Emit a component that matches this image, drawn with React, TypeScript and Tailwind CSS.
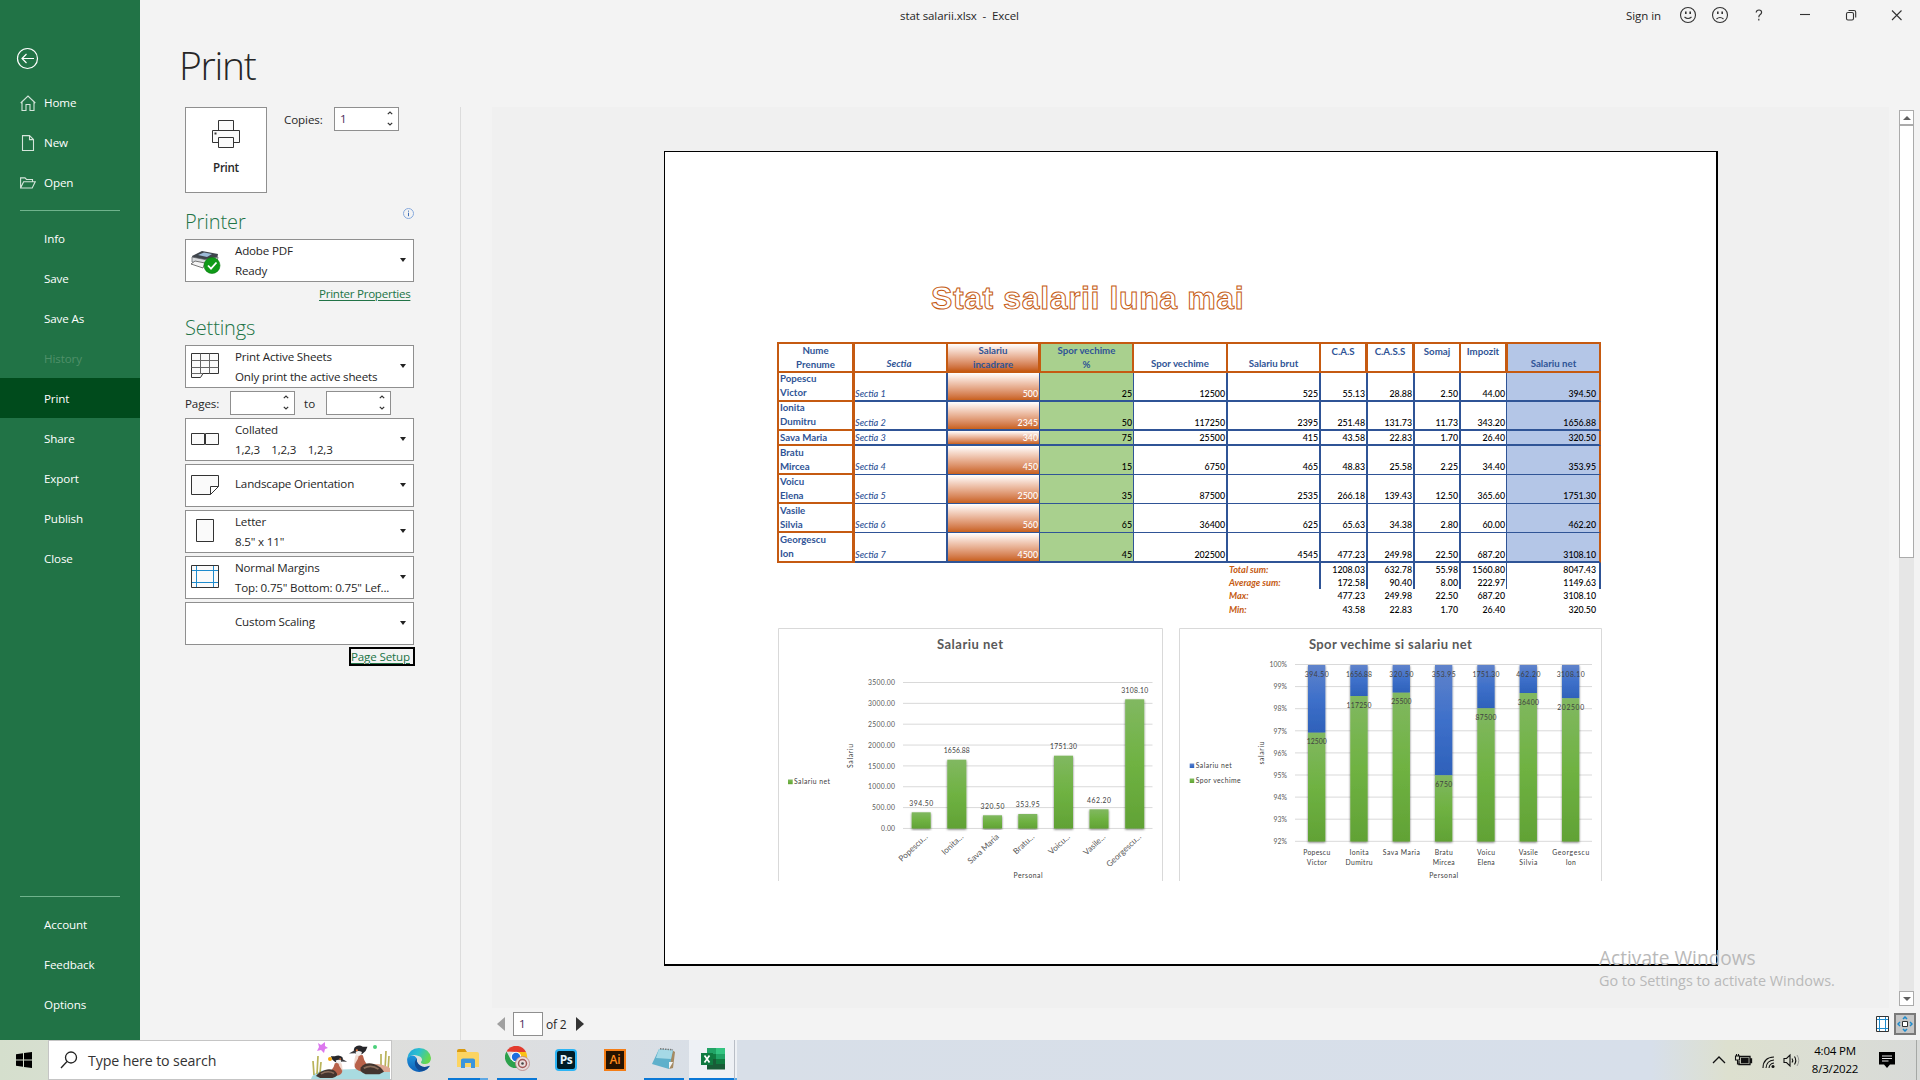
import React from "react";

const SEGOE = "font-['Open_Sans',sans-serif]";

/* ---------- Sidebar ---------- */

function NavItem({ label, icon, active, dim }: { label: string; icon?: React.ReactNode; active?: boolean; dim?: boolean }) {
  return (
    <div className={"flex h-10 shrink-0 items-center pl-5 text-[11.6px] " + (icon ? "" : "pt-px ") + (active ? "bg-[#004b1c] " : "") + (dim ? "text-[#4f9069]" : "text-white")}>
      <div className="w-6 shrink-0">{icon}</div>
      <span className="tracking-[-0.1px]">{label}</span>
    </div>
  );
}

function Sidebar() {
  return (
    <nav className="flex w-[140px] shrink-0 flex-col bg-[#217346]">
      <div className="h-[83px] shrink-0 pl-4 pt-[47px]">
        <svg width="23" height="23" viewBox="0 0 23 23" fill="none" stroke="#fff" strokeWidth="1.2">
          <circle cx="11.5" cy="11.5" r="10" />
          <path d="M18 11.5H6M10.5 7L6 11.5L10.5 16" />
        </svg>
      </div>
      <NavItem
        label="Home"
        icon={
          <svg width="16" height="17" viewBox="0 0 16 17" fill="none" stroke="#d5e5db" strokeWidth="1.1">
            <path d="M.7 8L8 1L15.3 8M2 7V15.5H6V9.5H10V15.5H14V7" />
          </svg>
        }
      />
      <NavItem
        label="New"
        icon={
          <svg width="16" height="17" viewBox="0 0 16 17" fill="none" stroke="#d5e5db" strokeWidth="1.1">
            <path d="M2.5 .6H9.5L13.5 4.6V15.5H2.5ZM9.5 .6V4.6H13.5" />
          </svg>
        }
      />
      <NavItem
        label="Open"
        icon={
          <svg width="16" height="13" viewBox="0 0 16 13" fill="none" stroke="#d5e5db" strokeWidth="1.1">
            <path d="M.6 11V.9H5L6.5 2.5H12.5V4.8M.6 11L3.6 4.8H15.2L12.2 11Z" />
          </svg>
        }
      />
      <div className="ml-5 mt-[7px] h-px w-[100px] shrink-0 bg-[#6fb38c]" />
      <div className="h-[7px] shrink-0" />
      <NavItem label="Info" />
      <NavItem label="Save" />
      <NavItem label="Save As" />
      <NavItem label="History" dim />
      <NavItem label="Print" active />
      <NavItem label="Share" />
      <NavItem label="Export" />
      <NavItem label="Publish" />
      <NavItem label="Close" />
      <div className="grow" />
      <div className="mb-[7px] ml-5 h-px w-[100px] shrink-0 bg-[#6fb38c]" />
      <NavItem label="Account" />
      <NavItem label="Feedback" />
      <NavItem label="Options" />
      <div className="h-4 shrink-0" />
    </nav>
  );
}

/* ---------- Title bar ---------- */

function TitleBar() {
  return (
    <div className="flex h-8 shrink-0 items-center text-[11.5px] text-[#262626]">
      <div className="w-[760px] shrink-0" />
      <div className="w-[726px] whitespace-pre tracking-[-0.08px]">stat salarii.xlsx  -  Excel</div>
      <div className="w-[53px] tracking-[-0.05px]">Sign in</div>
      <svg className="-mt-0.5" width="228" height="18" viewBox="0 0 228 18" fill="none" stroke="#333" strokeWidth="1.1">
        <circle cx="9" cy="9" r="7.5" />
        <path d="M5.5 11Q9 14 12.5 11" />
        <path d="M6.8 5.5v2.4M11.2 5.5v2.4" strokeWidth="1.6" />
        <circle cx="41" cy="9" r="7.5" />
        <path d="M37.5 13Q41 10 44.5 13" />
        <path d="M38.8 5.5v2.4M43.2 5.5v2.4" strokeWidth="1.6" />
        <path d="M77.2 6.5Q77.4 4 80 4Q82.600 4 82.600 6.3Q82.600 7.800 81 8.800Q79.800 9.600 79.800 11.200M79.800 12.800v1.6" strokeWidth="1.2" />
        <path d="M121 8.5h10" />
        <rect x="167.500" y="6.500" width="7" height="7.500" rx="1.500" />
        <path d="M169.500 4.500H175Q176.700 4.500 176.700 6.200V11.500" />
        <path d="M213 4.500L222.500 14M222.500 4.500L213 14" />
      </svg>
    </div>
  );
}

/* ---------- Print settings ---------- */

function Spinner({ value }: { value?: string }) {
  return (
    <div className="flex h-6 w-[65px] shrink-0 items-center justify-between border border-[#8f8f8f] bg-white px-[5px]">
      <span className="text-[11.6px] text-[#4a2a5a]">{value}</span>
      <svg className="mb-px" width="6" height="15" viewBox="0 0 6 15" fill="none" stroke="#333" strokeWidth="1.2">
        <path d="M.8 3.200L3 1L5.200 3.200M.8 11.800L3 14L5.200 11.800" />
      </svg>
    </div>
  );
}

function Combo({ icon, first, second, className }: { icon?: React.ReactNode; first: string; second?: string; className?: string }) {
  return (
    <div className={"flex h-[43px] w-[229px] shrink-0 items-center border border-[#8f8f8f] bg-white text-[11.6px] text-[#262626] " + (className ?? "")}>
      <div className="flex w-[49px] shrink-0 items-center pb-px pl-1">{icon}</div>
      <div className={"flex grow flex-col whitespace-pre leading-5 tracking-[-0.18px] " + (second ? "pt-px" : "pb-[3px]")}>
        <span>{first}</span>
        {second && <span>{second}</span>}
      </div>
      <div className="mb-px mr-[7px] h-0 w-0 border-x-[3.5px] border-t-4 border-x-transparent border-t-[#222]" />
    </div>
  );
}

const inkIcon = { fill: "#fafafa", stroke: "#333", strokeWidth: 1 };

function SettingsPanel() {
  return (
    <section className="flex w-[321px] shrink-0 flex-col border-r border-[#dcdcdc] pl-[45px]">
      <div className="flex">
        <div className="flex h-[86px] w-[82px] flex-col items-center border border-[#8f8f8f] bg-white pt-3">
          <svg width="28" height="28" viewBox="0 0 28 28" {...inkIcon}>
            <path d="M6.500 10.500V.5H21.500V10.500M.5 10.500H27.500V22.500H.5Z" />
            <path d="M6.500 17.500H21.500V27.500H6.500Z" />
            <path d="M2.500 12.500h2v2h-2z" fill="#333" stroke="none" />
          </svg>
          <span className="mt-[11px] text-[11.6px] font-semibold leading-[18px] tracking-[-0.3px] text-[#262626]">Print</span>
        </div>
        <span className="ml-[17px] mt-[4px] w-[50px] text-[11.6px] leading-[18px] tracking-[-0.1px] text-[#262626]">Copies:</span>
        <Spinner value="1" />
      </div>
      <div className="mt-3 flex h-[34px] w-[229px] items-start justify-between">
        <h2 className="mt-0.5 text-[20px] font-[350] leading-[30px] tracking-[-0.1px] text-[#217346]">Printer</h2>
        <svg className="mt-[3px]" width="11" height="11" viewBox="0 0 11 11" fill="none">
          <circle cx="5.500" cy="5.500" r="5" stroke="#86a9dc" />
          <path d="M5.500 4.700V8.200M5.500 2.600V3.700" stroke="#3f6fb5" />
        </svg>
      </div>
      <Combo
        first="Adobe PDF"
        second="Ready"
        icon={
          <svg className="mt-1" width="31" height="24" viewBox="0 0 31 24">
            <path d="M2 6L12 1L28 4L27 9L14 11L3 9Z" fill="#3f454c" />
            <path d="M8 5L14 2.500L22 4L17 7Z" fill="#9dbbd8" />
            <path d="M2 7L15 9.500L28 7L27 12L15 15L2 12Z" fill="#d9dcdf" stroke="#5a5d62" strokeWidth=".7" />
            <path d="M1 14L5 11L15 13L13 18Z" fill="#f4f4f4" stroke="#555" strokeWidth=".8" />
            <circle cx="22" cy="15.500" r="8" fill="#0f9a17" stroke="#0a7a10" strokeWidth=".6" />
            <path d="M18 15.500L21 18.700L26.500 12.500" fill="none" stroke="#fff" strokeWidth="1.800" />
          </svg>
        }
      />
      <a className="ml-[134px] mt-[3px] w-[95px] whitespace-nowrap text-[11.6px] leading-[18px] tracking-[-0.27px] text-[#217346] underline underline-offset-2">Printer Properties</a>
      <h2 className="mt-[10px] h-[32px] text-[20px] font-[350] leading-[30px] tracking-[-0.15px] text-[#217346]">Settings</h2>
      <Combo
        first="Print Active Sheets"
        second="Only print the active sheets"
        icon={
          <svg width="30" height="26" viewBox="0 0 30 26" {...inkIcon}>
            <path d="M1.500 .5H28.500V20.500H13L10.500 24.500H1.500Z" />
            <path d="M1.500 7.500H28.500M1.500 14.500H28.500M10.500 .5V20.500M19.500 .5V20.500M1.500 20.500H13" stroke="#666" />
          </svg>
        }
      />
      <div className="my-[3px] flex h-6 items-center text-[11.6px] text-[#262626]">
        <span className="w-[45px] pt-px tracking-[-0.1px]">Pages:</span>
        <Spinner />
        <span className="w-[31px] pl-[9px] pt-px">to</span>
        <Spinner />
      </div>
      <Combo
        className="mb-[3px]"
        first="Collated"
        second="1,2,3    1,2,3    1,2,3"
        icon={
          <svg width="30" height="12" viewBox="0 0 30 12" {...inkIcon}>
            <path d="M1.500 .5H14.500V11.500H1.500ZM15.500 .5H28.500V11.500H15.500Z" />
          </svg>
        }
      />
      <Combo
        className="mb-[3px]"
        first="Landscape Orientation"
        icon={
          <svg width="30" height="20" viewBox="0 0 30 20" {...inkIcon}>
            <path d="M1.500 .5H28.500V11.500L20.500 19.500H1.500ZM28.500 11.500H20.500V19.500" />
          </svg>
        }
      />
      <Combo
        className="mb-[3px]"
        first="Letter"
        second={'8.5" x 11"'}
        icon={
          <svg width="30" height="24" viewBox="0 0 30 24" {...inkIcon}>
            <path d="M6.500 .5H23.500V22.500H6.500Z" />
          </svg>
        }
      />
      <Combo
        className="mb-[3px]"
        first="Normal Margins"
        second={'Top: 0.75" Bottom: 0.75" Lef...'}
        icon={
          <svg width="30" height="24" viewBox="0 0 30 24" {...inkIcon}>
            <path d="M1.500 .5H28.500V22.500H1.500Z" />
            <path d="M2 5.500H28M2 17.500H28M6.500 1V22M23.500 1V22" stroke="#1e8bcd" />
          </svg>
        }
      />
      <Combo first="Custom Scaling" />
      <div className="ml-[164px] mt-0.5 flex h-[19px] w-[66px] items-center border-2 border-black">
        <a className="whitespace-nowrap text-[11.6px] leading-[15px] tracking-[-0.15px] text-[#217346] underline underline-offset-2">Page Setup</a>
      </div>
    </section>
  );
}

/* ---------- Worksheet preview ---------- */

const people = [
  ["Popescu", "Victor", "500", "25", "12500", "525", "55.13", "28.88", "2.50", "44.00", "394.50"],
  ["Ionita", "Dumitru", "2345", "50", "117250", "2395", "251.48", "131.73", "11.73", "343.20", "1656.88"],
  ["Sava Maria", "", "340", "75", "25500", "415", "43.58", "22.83", "1.70", "26.40", "320.50"],
  ["Bratu", "Mircea", "450", "15", "6750", "465", "48.83", "25.58", "2.25", "34.40", "353.95"],
  ["Voicu", "Elena", "2500", "35", "87500", "2535", "266.18", "139.43", "12.50", "365.60", "1751.30"],
  ["Vasile", "Silvia", "560", "65", "36400", "625", "65.63", "34.38", "2.80", "60.00", "462.20"],
  ["Georgescu", "Ion", "4500", "45", "202500", "4545", "477.23", "249.98", "22.50", "687.20", "3108.10"],
];

const totals = [
  ["Total sum:", "1208.03", "632.78", "55.98", "1560.80", "8047.43"],
  ["Average sum:", "172.58", "90.40", "8.00", "222.97", "1149.63"],
  ["Max:", "477.23", "249.98", "22.50", "687.20", "3108.10"],
  ["Min:", "43.58", "22.83", "1.70", "26.40", "320.50"],
];

const COLS = "grid grid-rows-[100%] grid-cols-[78px_93px_92px_94px_94px_93px_47px_47px_46px_46px_94px]";

const headers = [
  { t: "Nume\nPrenume", c: "border-l-2 border-r-[3px] items-end" },
  { t: "Sectia", c: "border-r-2 items-end pb-px pr-[3px] italic" },
  { t: "Salariu\nincadrare", c: "border-r-2 items-end bg-linear-to-b from-white to-[#c55a11]" },
  { t: "Spor vechime\n%", c: "border-r-2 border-l items-end bg-[#a9d08e]" },
  { t: "Spor vechime", c: "border-r-2 items-end pb-px" },
  { t: "Salariu brut", c: "border-r-2 items-end pb-px" },
  { t: "C.A.S", c: "border-r-[3px] items-start" },
  { t: "C.A.S.S", c: "border-r-[3px] items-start" },
  { t: "Somaj", c: "border-r-2 items-start" },
  { t: "Impozit", c: "border-r-2 items-start" },
  { t: "Salariu net", c: "border-l border-r-2 items-end pb-px bg-[#b4c6e7]" },
];

const numberCols = [
  "border-r text-white bg-linear-to-b from-white to-[#c8601a]",
  "border-r bg-[#a9d08e]",
  "border-r-2",
  "border-r-2",
  "border-r-2",
  "border-r-2",
  "border-r-2",
  "border-r",
  "border-r-2 border-r-[#c55a11] bg-[#b4c6e7]",
];

const rowHeights = ["h-[29px]", "h-[29px]", "h-[15px]", "h-[29px]", "h-[29px]", "h-[29px]", "h-[30px]"];

function SalaryTable() {
  return (
    <div className="w-[824px] font-[Lato,sans-serif] text-[8.800px] font-medium leading-[13px] text-black">
      <div className={COLS + " h-[31px]"}>
        {headers.map((h, i) => (
          <div key={i} className={"flex justify-center whitespace-pre border-y-2 border-[#c55a11] text-center text-[9.700px] font-bold leading-[14px] text-[#2f5496] " + h.c}>
            {h.t}
          </div>
        ))}
      </div>
      {people.map((p, r) => {
        const thick = r < 3 || r === 6;
        return (
          <div key={r} className={COLS + " " + rowHeights[r]}>
            <div className={"flex flex-col justify-end border-b-2 border-l-2 border-r-[3px] border-[#c55a11] pl-px text-[9.700px] font-bold text-[#2f5496] " + (p[1] ? "leading-[14px] " : "leading-[13px] ") + (thick && p[1] ? "pb-px" : "")}>
              <span>{p[0]}</span>
              {p[1] && <span>{p[1]}</span>}
            </div>
            <div className={"flex items-end border-r-2 border-[#2f5496] text-[9.200px] italic leading-[12px] text-[#2f5496] " + (thick ? "border-b-2" : "border-b pb-px")}>Sectia {r + 1}</div>
            {p.slice(2).map((v, c) => (
              <div key={c} className={"flex items-end justify-end border-b-[#2f5496] leading-[13px] " + (c < 8 ? "border-r-[#2f5496] pr-px " : "pr-[3px] ") + (thick ? "border-b-2 " : "border-b pb-px ") + numberCols[c]}>
                {v}
              </div>
            ))}
          </div>
        );
      })}
      {totals.map((t, r) => (
        <div key={r} className={COLS + " h-[13.200px]"}>
          <div className="col-span-5" />
          <div className={"pl-px text-[9.200px] font-bold italic leading-[14px] text-[#c55a11] " + (r < 2 ? "border-r-2 border-[#2f5496]" : "")}>{t[0]}</div>
          {t.slice(1).map((v, c) => (
            <div key={c} className={"text-right leading-[13px] " + (r < 2 ? "border-[#2f5496] " + (c === 3 ? "border-r pr-px" : c === 4 ? "border-r-2 pr-[3px]" : "border-r-2 pr-px") : c === 3 ? "pr-0.5" : c === 4 ? "pr-[5px]" : "pr-[3px]")}>
              {v}
            </div>
          ))}
        </div>
      ))}
    </div>
  );
}

/* ---------- Charts ---------- */

function Gradients() {
  return (
    <defs>
      <linearGradient id="greenBar" x1="0" y1="0" x2="0" y2="1">
        <stop offset="0" stopColor="#81b861" />
        <stop offset=".5" stopColor="#6fb242" />
        <stop offset="1" stopColor="#61a235" />
      </linearGradient>
      <linearGradient id="blueBar" x1="0" y1="0" x2="0" y2="1">
        <stop offset="0" stopColor="#6083cb" />
        <stop offset=".5" stopColor="#3e70ca" />
        <stop offset="1" stopColor="#2e61ba" />
      </linearGradient>
      <filter id="barShadow" x="-30%" y="-5%" width="160%" height="115%">
        <feDropShadow dx="0" dy="1" stdDeviation="1" floodOpacity=".55" />
      </filter>
    </defs>
  );
}

const netBars = [
  { n: "Popescu...", v: "394.50", x: 911.7, y: 812.3, ly: 803.7, w: 24 },
  { n: "Ionita...", v: "1656.88", x: 947.3, y: 759.7, ly: 750.7, w: 26 },
  { n: "Sava Maria", v: "320.50", x: 983, y: 815.3, ly: 806.3, w: 24 },
  { n: "Bratu...", v: "353.95", x: 1018.3, y: 814, ly: 804.700, w: 24 },
  { n: "Voicu...", v: "1751.30", x: 1054, y: 755.7, ly: 746.3, w: 27 },
  { n: "Vasile...", v: "462.20", x: 1089.5, y: 809.3, ly: 800.3, w: 24 },
  { n: "Georgescu...", v: "3108.10", x: 1125.2, y: 699.3, ly: 690.7, w: 27 },
];

function NetChart() {
  const ticks = ["3500.00", "3000.00", "2500.00", "2000.00", "1500.00", "1000.00", "500.00", "0.00"];
  return (
    <svg width="386" height="254" viewBox="778 628 386 254" className="font-[Lato,sans-serif] text-[6.800px]" fill="#404040">
      <Gradients />
      <path d="M778.500 882V628.500H1162.500V882" fill="#fff" stroke="#d9d9d9" />
      <text x="970" y="649" textAnchor="middle" textLength="66" className="text-[13px] font-bold" fill="#595959">Salariu net</text>
      {ticks.map((t, i) => (
        <g key={t}>
          <path d={`M903 ${682.5 + i * 20.85}H1152.500`} stroke="#d9d9d9" />
          <text x="895" y={685.2 + i * 20.85} textAnchor="end" textLength={i < 6 ? 27 : i === 6 ? 23 : 14} fill="#595959">{t}</text>
        </g>
      ))}
      {netBars.map((b) => (
        <g key={b.n}>
          <rect x={b.x} y={b.y} width="19" height={828.5 - b.y} fill="url(#greenBar)" filter="url(#barShadow)" />
          <text x={b.x + 9.5} y={b.ly + 2.500} textAnchor="middle" textLength={b.w}>{b.v}</text>
          <text transform={`translate(${b.x + 16.500} 837.500) rotate(-43)`} textAnchor="end" fill="#595959" className="text-[8.200px]">{b.n}</text>
        </g>
      ))}
      <text transform="translate(853 756) rotate(-90)" textAnchor="middle" textLength="24">Salariu</text>
      <rect x="788" y="779.500" width="4.700" height="4.700" fill="url(#greenBar)" />
      <text x="794" y="784.300" textLength="36">Salariu net</text>
      <text x="1028" y="877.500" textAnchor="middle" textLength="29">Personal</text>
    </svg>
  );
}

const stackBars = [
  { n: ["Popescu", "Victor"], w: [27, 20], net: "394.50", nw: 24, sp: "12500", sw: 20, y: 732.7 },
  { n: ["Ionita", "Dumitru"], w: [19, 27], net: "1656.88", nw: 26, sp: "117250", sw: 25, y: 696 },
  { n: ["Sava Maria"], w: [37], net: "320.50", nw: 24, sp: "25500", sw: 20, y: 692.7 },
  { n: ["Bratu", "Mircea"], w: [18, 22], net: "353.95", nw: 24, sp: "6750", sw: 17, y: 775.3 },
  { n: ["Voicu", "Elena"], w: [18, 17], net: "1751.30", nw: 27, sp: "87500", sw: 21, y: 708.3 },
  { n: ["Vasile", "Silvia"], w: [19, 18], net: "462.20", nw: 24, sp: "36400", sw: 21, y: 693 },
  { n: ["Georgescu", "Ion"], w: [37, 10], net: "3108.10", nw: 28, sp: "202500", sw: 27, y: 698.3 },
];

function StackedChart() {
  return (
    <svg width="424" height="254" viewBox="1179 628 424 254" className="font-[Lato,sans-serif] text-[6.800px]" fill="#404040">
      <path d="M1179.500 882V628.500H1601.500V882" fill="#fff" stroke="#d9d9d9" />
      <text x="1390.400" y="649" textAnchor="middle" textLength="163" className="text-[13px] font-bold" fill="#595959">Spor vechime si salariu net</text>
      {[100, 99, 98, 97, 96, 95, 94, 93, 92].map((t, i) => (
        <g key={t}>
          <path d={`M1295 ${664.5 + i * 22.1}H1592`} stroke="#d9d9d9" />
          <text x="1287" y={667.2 + i * 22.1} textAnchor="end" textLength={i ? 13.5 : 17.5} fill="#595959">{t}%</text>
        </g>
      ))}
      {stackBars.map((b, i) => {
        const x = 1308 + i * 42.33;
        return (
          <g key={b.sp}>
            <g filter="url(#barShadow)">
              <rect x={x} y="665" width="17.300" height={b.y - 665} fill="url(#blueBar)" />
              <rect x={x} y={b.y} width="17.300" height={841.5 - b.y} fill="url(#greenBar)" />
            </g>
            <text x={x + 8.7} y="676.800" textAnchor="middle" textLength={b.nw}>{b.net}</text>
            <text x={x + 8.7} y={b.y + 11.5} textAnchor="middle" textLength={b.sw}>{b.sp}</text>
            {b.n.map((n, k) => (
              <text key={n} x={x + 8.7} y={854.8 + k * 10} textAnchor="middle" textLength={b.w[k]}>{n}</text>
            ))}
          </g>
        );
      })}
      <text transform="translate(1264 753) rotate(-90)" textAnchor="middle" textLength="23">salariu</text>
      <rect x="1189.700" y="763.500" width="4.500" height="4.500" fill="url(#blueBar)" />
      <text x="1195.700" y="768.300" textLength="36">Salariu net</text>
      <rect x="1189.700" y="778.500" width="4.500" height="4.500" fill="url(#greenBar)" />
      <text x="1195.700" y="783.300" textLength="45">Spor vechime</text>
      <text x="1443.700" y="877.500" textAnchor="middle" textLength="29">Personal</text>
    </svg>
  );
}

function PreviewPage() {
  return (
    <div className="flex h-[815px] w-[1054px] flex-col border-b-2 border-l border-r-2 border-t border-black bg-white pl-[112px]">
      <h3 className="ml-[154px] mt-[123px] h-[41px] whitespace-nowrap pt-px font-['Liberation_Sans',sans-serif] text-[32px] font-bold leading-[44px] tracking-[0.6px] text-white [-webkit-text-stroke:1px_#c55a11]">
        Stat salarii luna mai
      </h3>
      <div className="mt-[26px]">
        <SalaryTable />
      </div>
      <div className="ml-px mt-[12px] flex h-[253px] gap-[15px] overflow-hidden">
        <NetChart />
        <StackedChart />
      </div>
    </div>
  );
}

function VScroll() {
  return (
    <div className="mt-[3px] flex h-[896px] w-[15px] flex-col bg-[#e6e6e6]">
      <div className="flex h-[15px] items-center justify-center border border-[#ababab] bg-white">
        <div className="border-x-4 border-b-4 border-x-transparent border-b-[#606060]" />
      </div>
      <div className="h-[433px] border border-[#ababab] bg-white" />
      <div className="grow" />
      <div className="flex h-[15px] items-center justify-center border border-[#ababab] bg-white">
        <div className="border-x-4 border-t-4 border-x-transparent border-t-[#606060]" />
      </div>
    </div>
  );
}

function PreviewArea() {
  return (
    <section className="flex grow flex-col pl-[31px]">
      <div className="flex h-[901px]">
        <div className="w-[1397px] shrink-0 bg-[#f0f0f0] pl-[172px] pt-[44px]">
          <PreviewPage />
        </div>
        <div className="w-[10px] shrink-0" />
        <VScroll />
      </div>
      <div className="flex h-8 items-center pl-[5px]">
        <div className="border-y-[7.5px] border-r-8 border-y-transparent border-r-[#a0a0a0]" />
        <div className="ml-2 flex h-6 w-[30px] items-center border border-[#8f8f8f] bg-white pl-[5px] text-[11.600px] text-[#4a2a5a]">1</div>
        <span className="w-[33px] pl-[3px] pt-px text-[12px] tracking-[-0.2px] text-[#262626]">of 2</span>
        <div className="border-y-[7.5px] border-l-8 border-y-transparent border-l-[#333]" />
        <div className="grow" />
        <svg className="mr-[5px]" width="13" height="16" viewBox="0 0 13 16" fill="#fff" stroke="#333">
          <path d="M.5 .5H12.500V15.500H.5Z" />
          <path d="M1 3.500H12M1 12.500H12M3.500 1V15M9.500 1V15" stroke="#1e8bcd" />
        </svg>
        <div className="mr-1 flex h-[22px] w-[22px] items-center justify-center border-2 border-[#7a7a7a] bg-[#c6c6c6]">
          <svg width="16" height="16" viewBox="0 0 16 16" fill="none">
            <path d="M5.500 5.500H10.500V10.500H5.500Z" fill="#fff" stroke="#333" />
            <path d="M6 3L8 1L10 3M6 13L8 15L10 13M3 6L1 8L3 10M13 6L15 8L13 10" stroke="#1e8bcd" strokeWidth="1.500" />
          </svg>
        </div>
      </div>
    </section>
  );
}

/* ---------- Taskbar ---------- */

/* A grebe facing right; the body trails to the left of the neck. */
function Duck() {
  return (
    <g>
      <path d="M23 12Q22 18 19 22L24 31Q33 29 32 22Q31 16 30 11Z" fill="#b8624a" />
      <path d="M27 11Q28 17 31 21L32 24Q33 16 30 10Z" fill="#efd9cf" />
      <path d="M0 31Q3 25 11 22Q20 19 25 26Q28 31 20 34H5Z" fill="#43352f" />
      <path d="M6 28Q14 22 22 27" fill="none" stroke="#8b6e5c" strokeWidth="2" />
      <path d="M20 7L18 2L23 2Q28 -1 32 3Q34 7 31 10Q25 12 23 10Z" fill="#26262a" />
      <path d="M24 8Q28 6 31 8L30 12Q25 14 24 8Z" fill="#f2f0ee" />
      <path d="M32 6L38 10L31 9.500Z" fill="#3a3a3e" />
      <circle cx="29.500" cy="6" r="1.200" fill="#e8763a" />
    </g>
  );
}

function TaskSlot({ className, children }: { className: string; children: React.ReactNode }) {
  return <div className={"flex h-10 shrink-0 items-center justify-center " + className}>{children}</div>;
}

function Taskbar() {
  return (
    <footer className="flex h-10 shrink-0 bg-[linear-gradient(90deg,#d5dfcd_0%,#dbdfd6_8%,#dedede_24%,#d8dfe8_38%,#d7dfea_86%,#dde0cf_90%,#dbded4_95%,#d8dad8_100%)] text-black">
      <div className="flex w-12 items-center pl-4">
        <svg width="16" height="16" viewBox="0 0 16 16" fill="#000">
          <path d="M0 2.300L7 1.300V7.500H0ZM8 1.100L16 0V7.500H8ZM0 8.500H7V14.700L0 13.700ZM8 8.500H16V16L8 14.900Z" />
        </svg>
      </div>
      <div className="flex w-[344px] shrink-0 items-center border border-[#c5c5c5] bg-white pl-[11px]">
        <svg width="18" height="18" viewBox="0 0 18 18" fill="none" stroke="#222" strokeWidth="1.300">
          <circle cx="11" cy="6.500" r="5.500" />
          <path d="M7 10.500L1 17" />
        </svg>
        <span className="ml-[10px] w-[223px] shrink-0 pt-px text-[14.200px] tracking-[-0.12px] text-[#333]">Type here to search</span>
        <svg className="shrink-0 self-end" width="79" height="37" viewBox="0 0 79 37">
          <path d="M0 37Q2 30 14 28L79 26V37Z" fill="#a9dbe0" />
          <path d="M3 33L2 19M6 32L7 14M9 31L10 20M70 29L70 12M74 28L75 9M77 29L78 14" stroke="#b9b35a" strokeWidth="1.700" />
          <path d="M54 26Q64 18 79 26V30H56Z" fill="#dda892" />
          <g transform="translate(5 13) scale(.82 .68)"><Duck /></g>
          <g transform="translate(73 3) scale(-.92 .86)"><Duck /></g>
          <path d="M7 1L10 3L14 0L14 4L17 6L14 7L13 11L10 8L6 9L8 5Z" fill="#dc78ee" />
          <circle cx="19" cy="17" r="2" fill="#f5a70b" />
          <circle cx="64" cy="5" r="2" fill="#4ad07a" />
        </svg>
      </div>
      <TaskSlot className="w-[56px] pr-[3px]">
        <svg width="24" height="24" viewBox="0 0 24 24">
          <defs>
            <linearGradient id="edgeTop" x1="0" y1="0" x2="1" y2=".4">
              <stop offset="0" stopColor="#1fa0dc" />
              <stop offset=".5" stopColor="#2cc0cf" />
              <stop offset="1" stopColor="#66d850" />
            </linearGradient>
            <linearGradient id="edgeBase" x1="0" y1="0" x2="0" y2="1">
              <stop offset="0" stopColor="#1f96dc" />
              <stop offset="1" stopColor="#0d60b8" />
            </linearGradient>
          </defs>
          <path d="M.2 10.500Q-.5 18 6 22.200Q12 25.500 18 22.500Q21 21 22.600 18.300Q22.500 17.500 21.500 18.200Q17 20 13.500 17.800Q9 15 10 10.800Q8 7 4 7.500Q1 8.300 .2 10.500Z" fill="url(#edgeBase)" />
          <path d="M10 10.800Q6.500 13.500 8.500 18.500Q11 23 16 23Q20.500 21.800 22.600 18.300Q22.500 17.500 21.500 18.200Q17 20 13.500 17.800Q9 15 10 10.800Z" fill="#114a92" />
          <path d="M.2 10.500Q2 0 12 0Q22.500 .5 24 10Q24 15.500 18.500 16Q13.500 16 14 14Q16.500 11 13 8.500Q5 4.500 .2 10.500Z" fill="url(#edgeTop)" />
        </svg>
      </TaskSlot>
      <div className="flex shrink-0">
        <TaskSlot className="w-[32px] border-b-2 border-[#0a78d6] pl-2">
          <svg className="shrink-0" width="22" height="20" viewBox="0 0 22 20">
            <path d="M0 2Q0 0 2 0H8L10 3H0Z" fill="#d99a10" />
            <path d="M0 3H20Q22 3 22 5V18H0Z" fill="#fcd462" />
            <path d="M4 19V11Q4 9.500 6 9.500H16Q18 9.500 18 11V19H14V14H8V19Z" fill="#3c95dc" />
          </svg>
        </TaskSlot>
        <div className="h-10 w-2 border-b-2 border-[#5fa8e4]" />
      </div>
      <TaskSlot className="ml-[9px] w-[40px] border-b-2 border-[#0a78d6] pl-0.5">
        <svg width="26" height="26" viewBox="0 0 26 26">
          <path d="M1.500 5.500A11 11 0 0 1 21 6H11Z" fill="#e33b2e" />
          <path d="M11 6H21A11 11 0 0 1 12 22L16 14Z" fill="#fbc116" />
          <path d="M1.500 5.500A11 11 0 0 0 12 22L16 14L6 14Z" fill="#2da14c" />
          <circle cx="11" cy="11" r="5.300" fill="#fff" />
          <circle cx="11" cy="11" r="4.200" fill="#1c6fe0" />
          <circle cx="17.500" cy="17.500" r="7" fill="#eadcdc" stroke="#b98080" strokeWidth=".8" />
          <circle cx="17.500" cy="17.500" r="4" fill="none" stroke="#a25757" strokeWidth="1.500" />
          <circle cx="17.500" cy="17.500" r="1.300" fill="#444" />
        </svg>
      </TaskSlot>
      <TaskSlot className="w-[58px]">
        <div className="flex h-[22px] w-[22px] items-center justify-center rounded-[4px] border-2 border-[#2cb5f5] bg-[#001d26] text-[12px] font-bold leading-none tracking-[-0.5px] text-[#e3f5ff]">Ps</div>
      </TaskSlot>
      <TaskSlot className="w-[40px]">
        <div className="flex h-[22px] w-[22px] items-center justify-center border-2 border-[#f47d16] bg-[#261300] text-[12px] font-semibold leading-none tracking-[-0.2px] text-[#ff8a1c]">Ai</div>
      </TaskSlot>
      <TaskSlot className="ml-[9px] w-[40px] border-b-2 border-[#0a78d6]">
        <svg width="24" height="22" viewBox="0 0 24 22">
          <path d="M20 2L23 4L21 20L17 21Z" fill="#a58a62" />
          <path d="M7 1L21 2L17 21L0 16Z" fill="#5fb0cb" />
          <path d="M7 1L21 2L19 11L4 10Z" fill="#a5d9e6" />
          <path d="M8 .8L21 1.800" stroke="#777" strokeWidth="1.500" strokeDasharray="1.500 1" />
          <path d="M17 14L21 14L17 21Z" fill="#f0f4f5" />
        </svg>
      </TaskSlot>
      <TaskSlot className="ml-[5px] w-[45px] border-b-2 border-[#0a78d6] bg-[#eef1f5] pl-[3px]">
        <svg width="24" height="22" viewBox="0 0 24 22">
          <path d="M6 0H15V6H6Z" fill="#21a366" />
          <path d="M15 0H24V6H15Z" fill="#33c481" />
          <path d="M6 6H15V11H6Z" fill="#107c41" />
          <path d="M15 6H24V11H15Z" fill="#21a366" />
          <path d="M6 11H24V21.500H6Z" fill="#185c37" />
          <path d="M15 11H24V16H15Z" fill="#107c41" />
          <path d="M0 5H12V17H0Z" fill="#0f7a40" />
          <path d="M3.500 7.500L8.500 14.500M8.500 7.500L3.500 14.500" stroke="#fff" strokeWidth="1.700" />
        </svg>
      </TaskSlot>
      <div className="w-[3px] border-b-2 border-l border-b-[#5fa8e4] border-l-[#b9bec6] bg-[#eef1f5]" />
      <div className="grow" />
      <svg className="mt-3 shrink-0" width="88" height="17" viewBox="0 0 88 17" fill="none" stroke="#111" strokeWidth="1.300">
        <path d="M1 11L7 5L13 11" />
        <path d="M27.500 4.500H38V12.500H27V9M38.500 7V10.500H39.500V7Z" />
        <path d="M29.500 6.500H36V10.500H29.500Z" fill="#111" />
        <path d="M23.500 4V8H27.500V4ZM24.500 2V4M26.500 2V4M25.500 8V12H28" strokeWidth="1.100" />
        <path d="M51 16Q51 5.500 62 5M54 16Q54.500 8.500 62 8M57 16Q57.500 11.500 62 11" strokeWidth="1.100" />
        <circle cx="61" cy="14.500" r="1.500" fill="#111" stroke="none" />
        <path d="M72 6.500H74.500L78 3V14L74.500 10.500H72ZM80 6.500Q81.500 8.500 80 10.500M82.500 4.500Q85 8.500 82.500 12.500" strokeWidth="1.100" />
        <path d="M85 3Q88.500 8.500 85 14" stroke="#999" strokeWidth="1" />
      </svg>
      <div className="flex w-[68px] shrink-0 flex-col items-center justify-center pl-0.5 text-[11.500px] leading-[18px] tracking-[-0.2px]">
        <span>4:04 PM</span>
        <span>8/3/2022</span>
      </div>
      <div className="flex w-[48px] shrink-0 items-center pl-[11px]">
        <svg width="16" height="16" viewBox="0 0 16 16">
          <path d="M0 0H16V12.500H11L8 16L5 12.500H0Z" fill="#000" />
          <path d="M3 4H13M3 6.500H13M3 9H9.500" stroke="#e5e5e5" strokeWidth="1.100" />
        </svg>
      </div>
      <div className="w-1 shrink-0 border-l border-[#a5a8a5]" />
    </footer>
  );
}

export default function App() {
  return (
    <div className={"relative flex h-[1080px] w-[1920px] flex-col overflow-hidden bg-[#f3f3f3] " + SEGOE}>
      <div className="flex h-[1040px] shrink-0">
        <Sidebar />
        <main className="flex grow flex-col">
          <TitleBar />
          <h1 className="h-[75px] shrink-0 pl-[39px] text-[39px] font-light leading-[66px] tracking-[-1.3px] text-[#262626]">Print</h1>
          <div className="flex h-[933px]">
            <SettingsPanel />
            <PreviewArea />
          </div>
        </main>
      </div>
      <Taskbar />
      <div className="absolute left-[1599px] top-[944px] whitespace-nowrap text-[#b9b9b9]">
        <p className="text-[19.100px] leading-[28px]">Activate Windows</p>
        <p className="text-[14.400px] leading-[18px]">Go to Settings to activate Windows.</p>
      </div>
    </div>
  );
}
